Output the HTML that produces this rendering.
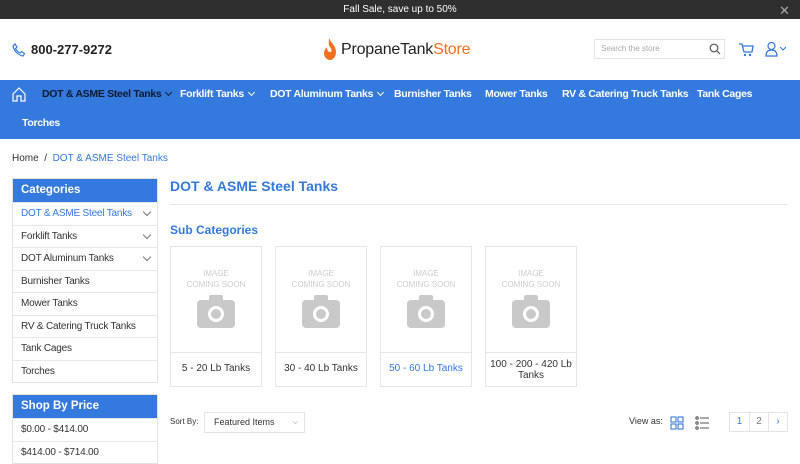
<!DOCTYPE html>
<html><head><meta charset="utf-8"><style>
*{margin:0;padding:0;box-sizing:border-box}
body{width:800px;height:450px;overflow:hidden;font-family:"Liberation Sans",sans-serif;background:#fff;color:#333;position:relative}
.a{position:absolute}
.top{left:0;top:0;width:800px;height:19px;background:#2f2f2f;color:#fff;font-size:10px;text-align:center;line-height:19px}
.nav{left:0;top:80px;width:800px;height:59px;background:#3479dd}
.nav span{position:absolute;color:#fff;font-size:10.5px;font-weight:bold;letter-spacing:-0.3px;white-space:nowrap}
.nav b{display:inline-block;width:5px;height:5px;border-right:1px solid currentColor;border-bottom:1px solid currentColor;transform:rotate(45deg);margin:0 0 2px 5px;font-weight:normal}
.side{left:12px;width:146px;border:1px solid #e2e2e2}
.sh{background:#3479dd;color:#fff;font-weight:bold;font-size:11.5px;height:23px;line-height:23px;padding-left:8px}
.si{height:22.5px;line-height:22px;font-size:10px;padding-left:8px;border-top:1px solid #e8e8e8;position:relative;letter-spacing:-0.2px}
.si i{position:absolute;right:7px;top:6px;width:6px;height:6px;border-right:1px solid #777;border-bottom:1px solid #777;transform:rotate(45deg)}
.card{top:246px;width:92px;height:141px;border:1px solid #e5e5e5}
.card .img{height:106px;border-bottom:1px solid #e5e5e5;text-align:center;color:#ccc;font-size:8px;line-height:11px;padding-top:21px}
.card .t{font-size:10px;text-align:center;padding-top:10px;line-height:11px}
.cam{margin:10px auto 0;width:38px;height:28px;background:#c9c9c9;border-radius:4px;position:relative}
.cam:before{content:"";position:absolute;left:12px;top:-5px;width:14px;height:6px;background:#c9c9c9;border-radius:2px 2px 0 0}
.cam:after{content:"";position:absolute;left:11px;top:6px;width:10px;height:10px;border:3px solid #fff;border-radius:50%}
</style></head><body>
<div class="a top">Fall Sale, save up to 50%</div>
<div class="a" style="left:779px;top:3px;color:#aaa;font-size:13px">✕</div>
<svg class="a" style="left:12px;top:43px" width="14" height="14" viewBox="0 0 14 14"><path d="M3 1l2 3-1.5 1.5c1 2 2.5 3.5 4.5 4.5L9.5 8.5l3 2L11 13C6 12 2 8 1 3z" fill="none" stroke="#3479dd" stroke-width="1.2"/></svg>
<div class="a" style="left:31px;top:42px;font-size:13px;font-weight:bold;color:#222">800-277-9272</div>
<svg class="a" style="left:320px;top:37px" width="20" height="26" viewBox="0 0 20 26"><path d="M9 1C11 6 16 9 16 15c0 5-3 8-6 8-3 0-6-3-6-7 0-3 2-4 2-6 2 2 1 5 4 5 2 0 2-3 0-5C8 8 9 5 9 1z" fill="#f26f21"/></svg>
<div class="a" style="left:341px;top:41px;font-size:16px;letter-spacing:-0.2px;color:#222">PropaneTank<span style="color:#f26f21">Store</span></div>
<div class="a" style="left:594px;top:39px;width:131px;height:20px;border:1px solid #e3e3e3;font-size:8px;color:#aaa;line-height:18px;padding-left:6px">Search the store</div>
<svg class="a" style="left:709px;top:43px" width="12" height="12"><circle cx="5" cy="5" r="3.8" fill="none" stroke="#555" stroke-width="1.2"/><path d="M8 8l3 3" stroke="#555" stroke-width="1.2"/></svg>
<svg class="a" style="left:738px;top:42px" width="16" height="15"><path d="M1 2h3l2 8h8l1-6H5" fill="none" stroke="#3479dd" stroke-width="1.3"/><circle cx="7" cy="13" r="1.2" fill="#3479dd"/><circle cx="12" cy="13" r="1.2" fill="#3479dd"/></svg>
<svg class="a" style="left:765px;top:41px" width="24" height="16"><circle cx="6.5" cy="5" r="3.5" fill="none" stroke="#3479dd" stroke-width="1.2"/><path d="M1 15c0-4 2-6 5.5-6s5.5 2 5.5 6z" fill="none" stroke="#3479dd" stroke-width="1.2"/><path d="M15 6l3 3 3-3" fill="none" stroke="#3479dd" stroke-width="1.1"/></svg>
<div class="a nav">
<svg style="position:absolute;left:12px;top:7px" width="14" height="15"><path d="M1 7L7 1l6 6v7H9V9H5v5H1z" fill="none" stroke="#fff" stroke-width="1.2"/></svg>
<span style="left:42px;top:8px;color:#0f1a2e">DOT &amp; ASME Steel Tanks<b></b></span>
<span style="left:180px;top:8px">Forklift Tanks<b></b></span>
<span style="left:270px;top:8px">DOT Aluminum Tanks<b></b></span>
<span style="left:394px;top:8px">Burnisher Tanks</span>
<span style="left:485px;top:8px">Mower Tanks</span>
<span style="left:562px;top:8px">RV &amp; Catering Truck Tanks</span>
<span style="left:697px;top:8px">Tank Cages</span>
<span style="left:22px;top:37px">Torches</span>
</div>
<div class="a" style="left:12px;top:153px;font-size:10px">Home &nbsp;/&nbsp; <span style="color:#3479dd">DOT &amp; ASME Steel Tanks</span></div>
<div class="a side" style="top:178px">
<div class="sh">Categories</div>
<div class="si" style="color:#3479dd">DOT &amp; ASME Steel Tanks<i></i></div>
<div class="si">Forklift Tanks<i></i></div>
<div class="si">DOT Aluminum Tanks<i></i></div>
<div class="si">Burnisher Tanks</div>
<div class="si">Mower Tanks</div>
<div class="si">RV &amp; Catering Truck Tanks</div>
<div class="si">Tank Cages</div>
<div class="si">Torches</div>
</div>
<div class="a side" style="top:394px">
<div class="sh">Shop By Price</div>
<div class="si">$0.00 - $414.00</div>
<div class="si">$414.00 - $714.00</div>
</div>
<div class="a" style="left:170px;top:178px;font-size:14px;font-weight:bold;color:#3479dd">DOT &amp; ASME Steel Tanks</div>
<div class="a" style="left:170px;top:204px;width:618px;height:1px;background:#e5e5e5"></div>
<div class="a" style="left:170px;top:223px;font-size:12px;font-weight:bold;color:#3479dd">Sub Categories</div>
<div class="a card" style="left:170px"><div class="img">IMAGE<br>COMING SOON<div class="cam"></div></div><div class="t">5 - 20 Lb Tanks</div></div>
<div class="a card" style="left:275px"><div class="img">IMAGE<br>COMING SOON<div class="cam"></div></div><div class="t">30 - 40 Lb Tanks</div></div>
<div class="a card" style="left:380px"><div class="img">IMAGE<br>COMING SOON<div class="cam"></div></div><div class="t" style="color:#3479dd">50 - 60 Lb Tanks</div></div>
<div class="a card" style="left:485px"><div class="img">IMAGE<br>COMING SOON<div class="cam"></div></div><div class="t" style="padding-top:6px">100 - 200 - 420 Lb Tanks</div></div>
<div class="a" style="left:170px;top:417px;font-size:8px">Sort By:</div>
<div class="a" style="left:204px;top:412px;width:101px;height:21px;border:1px solid #e3e3e3;font-size:9px;line-height:19px;padding-left:9px">Featured Items<span style="position:absolute;right:6px;font-size:7px;color:#777">⌵</span></div>
<div class="a" style="left:629px;top:416px;font-size:9px">View as:</div>
<svg class="a" style="left:670px;top:416px" width="14" height="14"><g fill="none" stroke="#3479dd" stroke-width="1.1"><rect x="1" y="1" width="5" height="5"/><rect x="8" y="1" width="5" height="5"/><rect x="1" y="8" width="5" height="5"/><rect x="8" y="8" width="5" height="5"/></g></svg>
<svg class="a" style="left:695px;top:416px" width="14" height="14"><g fill="none" stroke="#555" stroke-width="1.1"><circle cx="2" cy="2" r="1.2"/><circle cx="2" cy="7" r="1.2"/><circle cx="2" cy="12" r="1.2"/><path d="M5 2h9M5 7h9M5 12h9"/></g></svg>
<div class="a" style="left:729px;top:412px;width:59px;height:20px;border:1px solid #e3e3e3;font-size:10px;display:flex">
<div style="width:20px;text-align:center;line-height:18px;color:#3479dd;border-right:1px solid #e3e3e3">1</div>
<div style="width:19px;text-align:center;line-height:18px;color:#777;border-right:1px solid #e3e3e3">2</div>
<div style="width:18px;text-align:center;line-height:18px;color:#3479dd">›</div></div>
</body></html>
